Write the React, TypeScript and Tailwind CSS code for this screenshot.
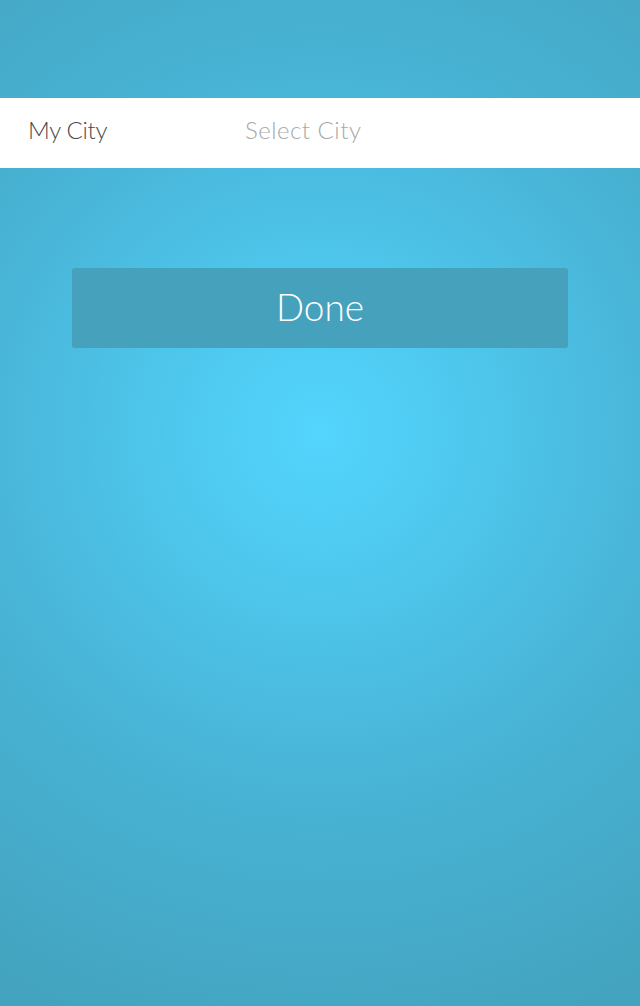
export default function App() {
  return (
    <div
      className="min-h-[1006px] w-full bg-[radial-gradient(circle_at_50%_43%,#53d5fd_0%,#4ec6ec_25%,#48b3d5_55%,#43a2bd_100%)] font-['Lato','Open_Sans',sans-serif]"
    >
      {/* City row */}
      <div className="pt-[98px]">
        <div className="flex h-[70px] items-center bg-white pb-[6px]">
          <span className="w-[245px] pl-[28px] text-[24px] font-light tracking-[-0.3px] text-[#4a4a4a]">My City</span>
          <span className="text-[24px] font-light tracking-[0.5px] text-[#a8a8a8]">Select City</span>
        </div>
      </div>

      {/* Done button */}
      <div className="px-[72px] pt-[100px]">
        <button className="flex h-[80px] w-full items-center justify-center rounded-[3px] bg-[#45a1bc] pb-[2px] text-[37px] font-light text-white">
          Done
        </button>
      </div>
    </div>
  );
}
